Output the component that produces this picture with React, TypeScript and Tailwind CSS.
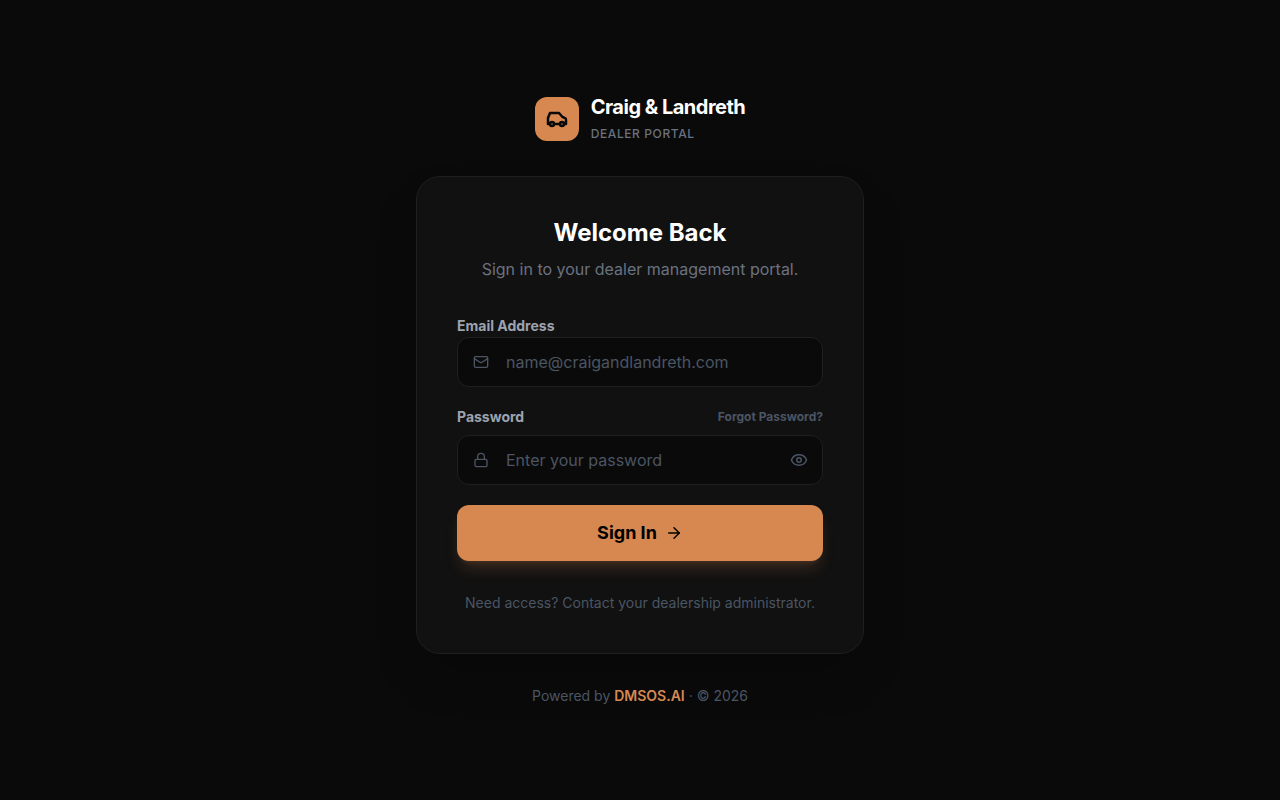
import { useState } from 'react';
import { ArrowRight, Eye, Lock, Mail } from 'lucide-react';

function CarIcon() {
  return (
    <svg
      className="h-6 w-6"
      viewBox="0 0 24 24"
      fill="none"
      stroke="currentColor"
      strokeWidth="2.5"
      strokeLinecap="round"
      strokeLinejoin="round"
      aria-hidden="true"
    >
      <path d="M5 17H3v-6l2-5h9l3.5 4 2.2.9A2 2 0 0 1 21 12.7V17h-2m-4 0H9" />
      <circle cx="7" cy="17" r="2" />
      <circle cx="17" cy="17" r="2" />
    </svg>
  );
}

const inputClass =
  'h-[50px] w-full rounded-xl border border-[#1f1f1f] bg-[#0a0a0a] pl-12 text-base text-white placeholder:text-[#4b5563] outline-none focus:border-[#d78851]';

export default function App() {
  const [showPassword, setShowPassword] = useState(false);

  return (
    <div className="flex min-h-screen flex-col items-center justify-center bg-[#0a0a0a] px-4 font-['Inter',sans-serif]">
      <header className="mb-8 flex items-center gap-3">
        <div className="flex h-11 w-11 items-center justify-center rounded-xl bg-[#d78851] text-[#0a0a0a]">
          <CarIcon />
        </div>
        <div>
          <h1 className="text-xl leading-[26px] font-bold tracking-tight text-white">Craig &amp; Landreth</h1>
          <p className="mt-1 text-xs leading-5 font-medium tracking-wider text-[#6b7280] uppercase">Dealer Portal</p>
        </div>
      </header>

      <main className="w-full max-w-md rounded-3xl border border-[#1f1f1f] bg-[#111111] p-10 shadow-2xl">
        <div className="mb-8 text-center">
          <h2 className="mb-1.5 text-2xl font-bold text-white">Welcome Back</h2>
          <p className="text-base leading-7 text-[#6b7280]">Sign in to your dealer management portal.</p>
        </div>

        <form className="flex flex-col gap-5" onSubmit={(e) => e.preventDefault()}>
          <div>
            <label htmlFor="email" className="block text-sm leading-[22px] font-bold text-[#9ca3af]">
              Email Address
            </label>
            <div className="relative">
              <Mail className="absolute inset-y-0 left-4 my-auto h-4 w-4 text-[#4b5563]" />
              <input id="email" type="email" placeholder="name@craigandlandreth.com" className={inputClass + ' pr-4'} />
            </div>
          </div>

          <div>
            <div className="mb-2 flex items-center justify-between">
              <label htmlFor="password" className="text-sm font-bold text-[#9ca3af]">
                Password
              </label>
              <a href="#" className="text-xs font-bold text-[#4b5563]">
                Forgot Password?
              </a>
            </div>
            <div className="relative">
              <Lock className="absolute inset-y-0 left-4 my-auto h-4 w-4 text-[#4b5563]" />
              <input
                id="password"
                type={showPassword ? 'text' : 'password'}
                placeholder="Enter your password"
                className={inputClass + ' pr-12'}
              />
              <button
                type="button"
                aria-label="Show password"
                onClick={() => setShowPassword(!showPassword)}
                className="absolute inset-y-0 right-[15px] text-[#4b5563]"
              >
                <Eye className="h-[18px] w-[18px]" />
              </button>
            </div>
          </div>

          <button
            type="submit"
            className="flex h-14 w-full items-center justify-center gap-2 rounded-xl bg-[#d78851] text-lg font-bold text-black shadow-lg shadow-[#d78851]/20"
          >
            Sign In
            <ArrowRight className="h-[18px] w-[18px]" />
          </button>
        </form>

        <p className="mt-8 text-center text-sm text-[#4b5563]">Need access? Contact your dealership administrator.</p>
      </main>

      <footer className="mt-8 text-sm text-[#4b5563]">
        Powered by <span className="font-semibold text-[#d78851]">DMSOS.AI</span> · © 2026
      </footer>
    </div>
  );
}
